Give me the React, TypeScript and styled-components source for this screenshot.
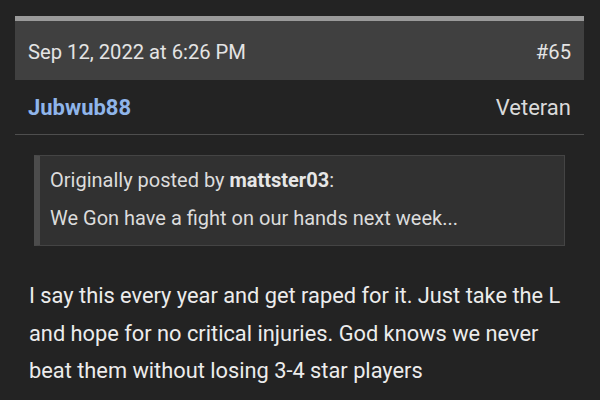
import React from 'react';
import styled, { createGlobalStyle } from 'styled-components';

const GlobalStyle = createGlobalStyle`
    html, body {
        margin: 0;
        padding: 0;
        background: #232323;
    }
    body {
        font-family: Roboto, "Noto Sans", sans-serif;
        color: #e2e2e2;
    }
`;

const post = {
    date: 'Sep 12, 2022 at 6:26 PM',
    number: 65,
    author: 'Jubwub88',
    rank: 'Veteran',
    quote: {
        by: 'mattster03',
        text: 'We Gon have a fight on our hands next week...',
    },
    body: 'I say this every year and get raped for it. Just take the L and hope for no critical injuries. God knows we never beat them without losing 3-4 star players',
};

const App = () => {
    return (
        <Page>
            <GlobalStyle />
            <Post>
                <Header>
                    <Stamp>{post.date}</Stamp>
                    <Stamp>#{post.number}</Stamp>
                </Header>
                <UserRow>
                    <Author>{post.author}</Author>
                    <Rank>{post.rank}</Rank>
                </UserRow>
                <Quote>
                    <QuoteLine>
                        Originally posted by <b>{post.quote.by}</b>:
                    </QuoteLine>
                    <QuoteLine>{post.quote.text}</QuoteLine>
                </Quote>
                <Body>{post.body}</Body>
            </Post>
        </Page>
    );
};

const Page = styled.div`
    width: 600px;
    height: 400px;
    overflow: hidden;
    padding: 16px 16px 0 15px;
    box-sizing: border-box;
`;

const Post = styled.div`
    display: flex;
    flex-direction: column;
`;

const Header = styled.div`
    display: flex;
    justify-content: space-between;
    align-items: center;
    height: 64px;
    padding: 3px 13px 0 13px;
    box-sizing: border-box;
    background: #404040;
    border-top: 5px solid #9a9a9a;
`;

const Stamp = styled.span`
    font-size: 20.2px;
    color: #e4e4e4;
`;

const UserRow = styled.div`
    display: flex;
    justify-content: space-between;
    align-items: center;
    height: 55px;
    box-sizing: border-box;
    padding: 0 13px;
    border-bottom: 1px solid #4e4e4e;
`;

const Author = styled.span`
    font-size: 22px;
    font-weight: 700;
    color: #8fb5ea;
`;

const Rank = styled.span`
    font-size: 22px;
    color: #dadada;
`;

const Quote = styled.div`
    margin: 20px 19px 0 19px;
    padding: 9px 14px 12px 10px;
    background: #313131;
    border: 1px solid #444444;
    border-left: 6px solid #4c4c4c;
    display: flex;
    flex-direction: column;
    gap: 8px;
`;

const QuoteLine = styled.div`
    font-size: 20px;
    line-height: 30px;
    color: #dcdcdc;

    b {
        font-weight: 700;
        color: #e6e6e6;
    }
`;

const Body = styled.p`
    margin: 31px 0 0 14px;
    font-size: 21.8px;
    line-height: 37.5px;
    color: #ececec;
`;

export default App;
